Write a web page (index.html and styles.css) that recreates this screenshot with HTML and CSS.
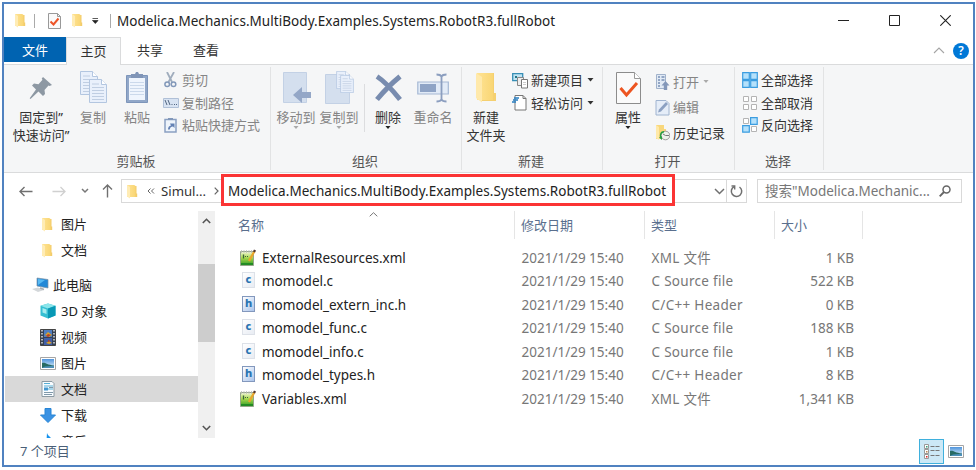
FILE: index.html
```html
<!DOCTYPE html>
<html lang="zh-CN">
<head>
<meta charset="utf-8">
<title>Modelica.Mechanics.MultiBody.Examples.Systems.RobotR3.fullRobot</title>
<link rel="stylesheet" href="styles.css">
</head>
<body>
<svg class="defs" width="0" height="0">
  <defs>
    <linearGradient id="gold" x1="0" x2="1"><stop offset="0" stop-color="#ffe394"/><stop offset="1" stop-color="#f9d675"/></linearGradient>
    <linearGradient id="sky" x1="0" y1="0" x2="0" y2="1"><stop offset="0" stop-color="#4f94dc"/><stop offset="1" stop-color="#e4f4fb"/></linearGradient>
    <linearGradient id="leaf" x1="0" y1="0" x2="0" y2="1"><stop offset="0" stop-color="#f5f8dc"/><stop offset=".45" stop-color="#a8d84e"/><stop offset="1" stop-color="#2f9a22"/></linearGradient>
  </defs>
  <symbol id="folder" viewBox="0 0 12 15"><path d="M6 2h4.500v7.500h.7V13H6z" fill="#f3cc6b"/><path d="M1 1h7a1.500 1.500 0 0 1 1.500 1.500V13H1z" fill="url(#gold)"/><path d="M1 1l3 2v11.500L1 12.500z" fill="#ffecb5"/></symbol>
  <symbol id="doc" viewBox="0 0 18 24"><path d="M.5.5h12l5 5v18H.5z" fill="#e9f0fb" stroke="#b3c6e0"/><path d="M12.500.5v5h5" fill="#fff" stroke="#b3c6e0"/><path d="M3 5h7M3 8.500h12M3 11.500h12M3 14.500h12M3 17.500h12M3 20.500h12" stroke="#c0cee2"/></symbol>
  <symbol id="picture" viewBox="0 0 16 13"><path d="M.5.5h15v12H.5z" fill="#fff" stroke="#a5a5a5"/><path d="M2 2h12v9H2z" fill="url(#sky)"/><path d="M2 6c3-1 5 2 12 2.500V11H2z" fill="#276a63"/><path d="M5 9.500l9-.7V11H2z" fill="#4c8fb7"/></symbol>
  <symbol id="xml" viewBox="0 0 18 18"><path d="M1.500 2.500h13v14h-13z" fill="url(#leaf)" stroke="#96a68b"/><path d="M2 14h12v2H2z" fill="#238b24"/><path d="M2.500 1v3M5 1v3M7.500 1v3M10 1v3M12.500 1v3" stroke="#bbb" stroke-width=".8"/><path d="M4.500 5.500v4" stroke="#386438" stroke-width="1.300"/><path d="M6 7.500h4" stroke="#386438" stroke-dasharray="1 1"/><path d="M10 12L15.500 2" stroke="#e9a62d" stroke-width="2.300"/><path d="M15 3l1-2" stroke="#4f3735" stroke-width="2.300"/></symbol>
  <symbol id="down" viewBox="0 0 7 4"><path d="M.5 0h6l-3 3.500z" fill="currentColor"/></symbol>
</svg>
<div class="window">
  <header class="titlebar">
    <svg class="tb-folder" width="12" height="15"><use href="#folder"/></svg>
    <i class="tb-line"></i>
    <svg class="tb-check" width="13" height="16" viewBox="0 0 13 16"><path d="M.5.5h9l3 3v12H.5z" fill="#fafafa" stroke="#999"/><path d="M9.500.5v3h3" fill="none" stroke="#999"/><path d="M2.500 8.500l3 3 5-6" fill="none" stroke="#ed5427" stroke-width="2"/></svg>
    <svg class="tb-folder2" width="12" height="15"><use href="#folder"/></svg>
    <svg class="tb-drop" width="7" height="6" viewBox="0 0 7 6"><path d="M.5.5h5.500M.5 2.500h5.500l-2.700 3z" fill="#222" stroke="#333" stroke-width=".8"/></svg>
    <i class="tb-line last"></i>
    <span class="title">Modelica.Mechanics.MultiBody.Examples.Systems.RobotR3.fullRobot</span>
    <div class="controls">
      <svg width="11" height="11" viewBox="0 0 11 11"><path d="M0 5.500h11" stroke="#222"/></svg>
      <svg width="11" height="11" viewBox="0 0 11 11"><path d="M.5.5h10v10H.5z" fill="none" stroke="#222"/></svg>
      <svg width="11" height="11" viewBox="0 0 11 11"><path d="M.3.3l10.400 10.400M10.700.3L.3 10.700" stroke="#222" stroke-width="1.100"/></svg>
    </div>
  </header>
  <nav class="tabs">
    <span class="tab file">文件</span><span class="tab active">主页</span><span class="tab share">共享</span><span class="tab view">查看</span>
    <div class="tabs-end">
      <svg width="12" height="7" viewBox="0 0 12 7"><path d="M1 6l5-5 5 5" fill="none" stroke="#a5a5a5" stroke-width="1.100"/></svg>
      <span class="help">?</span>
    </div>
  </nav>
  <section class="ribbon">
    <div class="group clipboard">
      <div class="tools">
        <div class="big pin"><div class="pic"><svg width="24" height="24" viewBox="0 0 24 24"><path d="M14 1l9 8-2.500 1-1-.5-4 4.500.5 4-2 2-4.500-4.500L1.500 23l-.8-.7L7 13.500 3 9.500l2-2 4.500.7 4-4.500-.8-1z" fill="#8d98a3"/></svg></div><span>固定到”<br>快速访问”</span></div>
        <div class="big copy off"><div class="pic"><svg width="27" height="33" viewBox="0 0 27 33"><use href="#doc" width="18" height="24"/><use href="#doc" x="9" y="8" width="18" height="24"/></svg></div><span>复制</span></div>
        <div class="big paste off"><div class="pic"><svg width="24" height="33" viewBox="0 0 24 33"><path d="M1.500 4.500h21v27h-21z" fill="#91a7c8" stroke="#7d95ba"/><path d="M4 7h16v22H4z" fill="#eff5fd"/><path d="M5 11.500h14M5 14.500h14M5 17.500h14M5 20.500h14M5 23.500h14" stroke="#cbd9eb"/><path d="M6 3h4l1-2h2l1 2h4v4H6z" fill="#8095b7"/></svg></div><span>粘贴</span></div>
        <div class="smalls off">
          <div class="small"><svg width="16" height="16" viewBox="0 0 16 16"><path d="M4 0l5 10M11 0L5.500 10" stroke="#a0adbd" stroke-width="1.800"/><circle cx="4.200" cy="12.300" r="2.300" fill="none" stroke="#8298b9" stroke-width="1.500"/><circle cx="10.500" cy="12.300" r="2.300" fill="none" stroke="#8298b9" stroke-width="1.500"/></svg>剪切</div>
          <div class="small"><svg width="16" height="16" viewBox="0 0 16 16"><path d="M.5 3.500h15v9H.5z" fill="#d8e3f2" stroke="#b0c0d7"/><path d="M2 5l2 5M5 5l2 5M8.500 9.500h1M11 9.500h1M13 9.500h1" stroke="#526681"/></svg>复制路径</div>
          <div class="small"><svg width="16" height="16" viewBox="0 0 16 16"><path d="M2 2.500h11v12.500H2z" fill="#eef4fb" stroke="#8aa0c2" stroke-width="1.500"/><path d="M5 3V1h5v2z" fill="#8298ba"/><path d="M5 12.500c0-2.500 1-3.500 3-4L7 6.500h4.500V11l-1.500-1.500c-2 0-3 1-3.200 3z" fill="#6381b4"/></svg>粘贴快捷方式</div>
        </div>
      </div>
      <div class="caption">剪贴板</div>
    </div>
    <div class="group organize">
      <div class="tools">
        <div class="big move off"><div class="pic"><svg width="29" height="33" viewBox="0 0 29 33"><path d="M1.500 1.500h23v30h-23z" fill="#d4dfee" stroke="#c3d1e5"/><path d="M11 24l9-8v5h9v6h-9v5z" fill="#94a7c7"/></svg></div><span>移动到</span><svg class="drop" width="6" height="3.500"><use href="#down"/></svg></div>
        <div class="big copyto off"><div class="pic"><svg width="30" height="34" viewBox="0 0 30 34"><path d="M1.500 3.500h24v29h-24z" fill="#d4dfee" stroke="#c3d1e5"/><use href="#doc" x="12" width="14" height="18"/><use href="#doc" x="16" y="4" width="14" height="18"/></svg></div><span>复制到</span><svg class="drop" width="6" height="3.500"><use href="#down"/></svg></div>
        <i class="divider"></i>
        <div class="big delete"><div class="pic"><svg width="27" height="28" viewBox="0 0 27 28"><path d="M2 2.500c8 5 15 13 23 23M25 2.500C17 9 9 17 2 25.500" fill="none" stroke="#788caf" stroke-width="5"/></svg></div><span>删除</span><svg class="drop" width="6" height="3.500"><use href="#down"/></svg></div>
        <div class="big rename off"><div class="pic"><svg width="32" height="30" viewBox="0 0 32 30"><path d="M.8 9h30.500v12H.8z" fill="#e2ebf7" stroke="#a5b8d4" stroke-width="1.200"/><path d="M3 11h16v8H3z" fill="#8fa4c6"/><path d="M19.500 1.500q4 0 5 2 1-2 5-2M24.500 3v24M19.500 28.500q4 0 5-2 1 2 5 2" fill="none" stroke="#8b9ebf" stroke-width="1.800"/></svg></div><span>重命名</span></div>
      </div>
      <div class="caption">组织</div>
    </div>
    <div class="group new">
      <div class="tools">
        <div class="big newfolder"><div class="pic"><svg width="22" height="31" viewBox="0 0 22 31"><path d="M7 1h12v20h2v8H7z" fill="#f5d070"/><path d="M2 1h15q1 0 1 1v26H2z" fill="url(#gold)"/><path d="M1 1l6 4v25.500L1 26z" fill="#ffe9ab"/></svg></div><span>新建<br>文件夹</span></div>
        <div class="smalls">
          <div class="small"><svg width="16" height="17" viewBox="0 0 16 17"><path d="M.7 1.700h10v7h-10z" fill="#c1e3f2" stroke="#378eb5" stroke-width="1.300"/><path d="M5.500 5.500h6v8h-6z" fill="#eee" stroke="#888"/><path d="M9.500 7.500h6v8.500h-6z" fill="#fff" stroke="#777"/><path d="M11 10.500h3M11 12.500h3" stroke="#ccc"/><path d="M3 4h2v2H3z" fill="#278"/></svg>新建项目<svg class="arrow" width="7" height="4"><use href="#down"/></svg></div>
          <div class="small"><svg width="16" height="17" viewBox="0 0 16 17"><path d="M3 1.500h8l3 3v11.500H3z" fill="#fff" stroke="#777"/><path d="M11 1.500v3h3" fill="none" stroke="#777"/><path d="M2 4h5M1 6h5M0 8h4" stroke="#267dc1" stroke-width="1.300"/></svg>轻松访问<svg class="arrow" width="7" height="4"><use href="#down"/></svg></div>
        </div>
      </div>
      <div class="caption">新建</div>
    </div>
    <div class="group open">
      <div class="tools">
        <div class="big props"><div class="pic"><svg width="25" height="32" viewBox="0 0 25 32"><path d="M.5.5h18l6 6v25H.5z" fill="#fafafa" stroke="#8c8c8c"/><path d="M18.500.5v6h6" fill="#fff" stroke="#999"/><path d="M4.500 16l6 7L21 11" fill="none" stroke="#ed5521" stroke-width="3"/></svg></div><span>属性</span><svg class="drop" width="6" height="3.500"><use href="#down"/></svg></div>
        <div class="smalls loose">
          <div class="small off"><svg width="15" height="18" viewBox="0 0 15 18"><path d="M1.500 1.500h9v14h-9z" fill="#e1eaf5" stroke="#a1b2cb"/><path d="M3 4h2M6.500 4h3M3 7h2M6.500 7h3M3 10h2M3 13h2" stroke="#7890b5" stroke-width="1.700"/><path d="M10.500 8l4 4.500h-2.300V17H8.800v-4.500H6.500z" fill="#8397b9"/></svg>打开<svg class="arrow" width="6" height="3.500"><use href="#down"/></svg></div>
          <div class="small off"><svg width="15" height="17" viewBox="0 0 15 17"><path d="M1 1.500h10l3 3V16H1z" fill="#e5edf8" stroke="#a0b4d0"/><path d="M3 13.500l1-3L11 3l2 2-7 7.500z" fill="#8ca1c2"/></svg>编辑</div>
          <div class="small"><svg width="15" height="17" viewBox="0 0 15 17"><path d="M1 1h8v4h2v10H1z" fill="#f8d77c"/><path d="M1 1l3 2v13l-3-2z" fill="#ffe9a8"/><circle cx="10.500" cy="11.500" r="4.300" fill="#eef3eb" stroke="#888" stroke-width=".8"/><path d="M14 11.500h-3.500L8 10" fill="none" stroke="#777"/><path d="M9 7c-3.500 0-4.500 3-4 6l-1 .5L7 16v-4l-1 .7C6 10 7 9 9 8.500z" fill="#28a044"/></svg>历史记录</div>
        </div>
      </div>
      <div class="caption">打开</div>
    </div>
    <div class="group select">
      <div class="tools">
        <div class="smalls">
          <div class="small"><svg width="16" height="16" viewBox="0 0 16 16"><path d="M.7.7h6.600v6.600H.7zM8.700.7h6.600v6.600H8.700zM.7 8.700h6.600v6.600H.7zM8.700 8.700h6.600v6.600H8.700z" fill="#b5e1fb" stroke="#3b9de0" stroke-width="1.200"/></svg>全部选择</div>
          <div class="small"><svg width="16" height="16" viewBox="0 0 16 16"><path d="M1.500 1.500h5v5h-5zM9.500 1.500h5v5h-5zM1.500 9.500h5v5h-5zM9.500 9.500h5v5h-5z" fill="#fff" stroke="#b4b4b4"/></svg>全部取消</div>
          <div class="small"><svg width="16" height="16" viewBox="0 0 16 16"><path d="M1.500 1.500h5v5h-5zM9.500 9.500h5v5h-5z" fill="#fff" stroke="#b4b4b4"/><path d="M8.600.7h6.600v6.600H8.600zM.7 8.600h6.600v6.600H.7z" fill="#b5e1fb" stroke="#3b9de0" stroke-width="1.200"/></svg>反向选择</div>
        </div>
      </div>
      <div class="caption">选择</div>
    </div>
  </section>
  <section class="location">
    <svg class="back" width="14" height="11" viewBox="0 0 14 11"><path d="M13.500 5.500H1M5.500 1L1 5.500 5.500 10" fill="none" stroke="#707070" stroke-width="1.400"/></svg>
    <svg class="forward" width="14" height="11" viewBox="0 0 14 11"><path d="M.5 5.500H13M8.500 1L13 5.500 8.500 10" fill="none" stroke="#d0d0d0" stroke-width="1.300"/></svg>
    <svg class="recent" width="8" height="6" viewBox="0 0 8 6"><path d="M1 1l3 3 3-3" fill="none" stroke="#777" stroke-width="1.500"/></svg>
    <svg class="up" width="11" height="14" viewBox="0 0 11 14"><path d="M5.500 13.500V1M1 5.500L5.500 1 10 5.500" fill="none" stroke="#707070" stroke-width="1.400"/></svg>
    <div class="address">
      <svg class="addr-folder" width="12" height="15"><use href="#folder"/></svg>
      <svg class="chevs" width="8" height="6" viewBox="0 0 8 6"><path d="M3.500.5L1 3l2.500 2.500M7 .5L4.500 3 7 5.500" fill="none" stroke="#666"/></svg>
      <span class="crumb">Simul...</span>
      <svg class="chev" width="5" height="8" viewBox="0 0 5 8"><path d="M.7.7L4 4 .7 7.300" fill="none" stroke="#666" stroke-width="1.200"/></svg>
      <span class="path">Modelica.Mechanics.MultiBody.Examples.Systems.RobotR3.fullRobot</span>
      <svg class="expand" width="11" height="7" viewBox="0 0 11 7"><path d="M1 1l4.500 4.500L10 1" fill="none" stroke="#707070" stroke-width="1.500"/></svg>
      <span class="refresh"><svg width="13" height="14" viewBox="0 0 13 14"><path d="M4.200 2.600A5.200 5.200 0 1 0 9.500 3" fill="none" stroke="#707070" stroke-width="1.500"/><path d="M1.500 2h3.200v3.500" fill="none" stroke="#707070" stroke-width="1.400"/></svg></span>
    </div>
    <div class="search"><span>搜索"Modelica.Mechanic...</span><svg width="12" height="12" viewBox="0 0 12 12"><circle cx="7.500" cy="4.500" r="3.500" fill="none" stroke="#666" stroke-width="1.500"/><path d="M5 7L.7 11.300" stroke="#666" stroke-width="1.900"/></svg></div>
  </section>
  <main class="content">
    <aside class="sidebar">
      <div class="tree">
        <div class="node"><svg width="16" height="15"><use href="#folder" width="12" height="15" x="1"/></svg>图片</div>
        <div class="node"><svg width="16" height="15"><use href="#folder" width="12" height="15" x="1"/></svg>文档</div>
        <div class="node pc"><svg width="18" height="16" viewBox="0 0 18 16"><path d="M5 1l11 1.500v8.500L5 9z" fill="#2389d7" stroke="#7b91a4" stroke-width=".7"/><path d="M6 2l7 1-7 5z" fill="#58baf3"/><path d="M0 12l6-1.500 6 2.500-6 2z" fill="#d3d7da"/><path d="M8 11l4 1.500" stroke="#a9aeb2" stroke-width="1.500"/></svg>此电脑</div>
        <div class="node"><svg width="16" height="16" viewBox="0 0 16 16"><path d="M8 .5l7.500 2.300v9.700L8 15.500.5 12.500V2.800z" fill="#35bfd2"/><path d="M8 .5l7.500 2.300L8 5.500.5 2.800z" fill="#8be5ea"/><path d="M8 5.500l7.500-2.700v9.700L8 15.500z" fill="#0898b5"/><path d="M2.500 5l4 1.500v4.500l-4-1.500z" fill="#a5ecef"/></svg>3D 对象</div>
        <div class="node"><svg width="16" height="17" viewBox="0 0 16 17"><path d="M.5.5h15v16H.5z" fill="#354256" stroke="#444"/><path d="M4 1h8v7H4z" fill="#507ec1"/><path d="M4 9h8v7H4z" fill="#415fa7"/><path d="M5 6l3-3 4 3-3 2zM6 14l3-2 3 2-3 1z" fill="#d8a32b"/><path d="M8 5l3 1-3 2-2-1zM8 11l3 1-3 1z" fill="#b74228"/><path d="M2 1v15M14 1v15" stroke="#ddd" stroke-width="1.500" stroke-dasharray="1.500 1.500"/></svg>视频</div>
        <div class="node"><svg width="16" height="13"><use href="#picture"/></svg>图片</div>
        <div class="node selected"><svg width="16" height="16" viewBox="0 0 16 16"><path d="M2 .5h10l2 2v13H2z" fill="#f8fcff" stroke="#8c9aa3"/><path d="M4 2.500h6M4 5h9M4 8h9" stroke="#56afd5"/><path d="M4 6.500h4v3H4z" fill="#4498d0"/><path d="M9 6.500h4M4 11.500h9M4 13.500h8" stroke="#8099aa"/></svg>文档</div>
        <div class="node"><svg width="16" height="15" viewBox="0 0 16 15"><path d="M5 .5h6v6.500h4.500L8 14.500.5 7H5z" fill="#3b92e3" stroke="#2785d6"/></svg>下载</div>
        <div class="node"><svg width="16" height="16" viewBox="0 0 16 16"><path d="M7 0c1 4 6 4 5 10-1-3-3-3-4-3v7H6z" fill="#1692ed"/></svg>音乐</div>
      </div>
      <div class="scrollbar">
        <svg width="9" height="6" viewBox="0 0 9 6"><path d="M.8 5l3.700-3.700L8.200 5" fill="none" stroke="#555" stroke-width="1.600"/></svg>
        <i class="thumb"></i>
        <svg width="9" height="6" viewBox="0 0 9 6"><path d="M.8 1l3.700 3.700L8.200 1" fill="none" stroke="#555" stroke-width="1.600"/></svg>
      </div>
    </aside>
    <section class="files">
      <div class="head"><span class="col-name">名称<svg class="sort" width="9" height="5" viewBox="0 0 9 5"><path d="M.7 4.300L4.500.7l3.800 3.600" fill="none" stroke="#777"/></svg></span><span>修改日期</span><span>类型</span><span>大小</span></div>
      <div class="row"><svg width="18" height="18"><use href="#xml"/></svg><span class="fn">ExternalResources.xml</span><span>2021/1/29 15:40</span><span class="type">XML 文件</span><span class="size">1 KB</span></div>
      <div class="row"><i class="src">c</i><span class="fn">momodel.c</span><span>2021/1/29 15:40</span><span class="type">C Source file</span><span class="size">522 KB</span></div>
      <div class="row"><i class="src hdr">h</i><span class="fn">momodel_extern_inc.h</span><span>2021/1/29 15:40</span><span class="type">C/C++ Header</span><span class="size">0 KB</span></div>
      <div class="row"><i class="src">c</i><span class="fn">momodel_func.c</span><span>2021/1/29 15:40</span><span class="type">C Source file</span><span class="size">188 KB</span></div>
      <div class="row"><i class="src">c</i><span class="fn">momodel_info.c</span><span>2021/1/29 15:40</span><span class="type">C Source file</span><span class="size">1 KB</span></div>
      <div class="row"><i class="src hdr">h</i><span class="fn">momodel_types.h</span><span>2021/1/29 15:40</span><span class="type">C/C++ Header</span><span class="size">8 KB</span></div>
      <div class="row"><svg width="18" height="18"><use href="#xml"/></svg><span class="fn">Variables.xml</span><span>2021/1/29 15:40</span><span class="type">XML 文件</span><span class="size">1,341 KB</span></div>
    </section>
  </main>
  <footer class="status"><span>7 个项目</span>
    <div class="views"><span class="details"><svg width="16" height="15" viewBox="0 0 16 15"><path d="M.5.5h4v4h-4zM.5 5.500h4v4h-4zM.5 10.500h4v4h-4z" fill="#fff" stroke="#999"/><path d="M6.500 2.500h4M11.500 2.500h4M6.500 6.500h4M11.500 6.500h4M6.500 11.500h4M11.500 11.500h4" stroke="#777"/><path d="M2 2h1.500v1.500H2z" fill="#397"/><path d="M2 7h1.500v1.500H2z" fill="#b85"/><path d="M2 12h1.500v1.500H2z" fill="#d22"/></svg></span><svg width="16" height="13"><use href="#picture"/></svg></div>
  </footer>
</div>
</body>
</html>
```
FILE: styles.css
```css
* { box-sizing: border-box; }
body { margin: 0; background: #fff; color: #333; font: 13px/18px "Noto Sans", "Noto Sans CJK SC", sans-serif; overflow: hidden; }
svg { display: block; flex: none; }
i { font-style: normal; flex: none; }
span { white-space: nowrap; }
.defs { position: absolute; }
.window { margin: 2px 1px 0 2px; width: 973px; height: 465px; border: 2px solid #5082c0; display: flex; flex-direction: column; background: #fff; }

.titlebar { height: 33px; flex: none; display: flex; align-items: center; padding-left: 10px; }
.tb-line { width: 1px; height: 14px; background: #aaa; margin-left: 8px; }
.tb-check { margin-left: 13px; }
.tb-folder2 { margin-left: 10px; }
.tb-drop { margin-left: 9px; }
.tb-line.last { margin-left: 11px; }
.title { margin-left: 6px; font-size: 13.500px; letter-spacing: .05px; color: #222; }
.controls { margin-left: auto; display: flex; gap: 40px; padding-right: 22px; }

.tabs { height: 27px; flex: none; display: flex; }
.tab { display: flex; justify-content: center; align-items: center; height: 26px; width: 56px; }
.tab.file { width: 62px; height: 25px; background: #0063b1; color: #fff; }
.tab.active { height: 28px; padding-bottom: 2px; background: #f5f6f7; border: 1px solid #dadbdc; border-bottom: 0; position: relative; z-index: 1; width: 55px; margin-right: 1px; }
.tabs-end { margin-left: auto; display: flex; align-items: center; gap: 8px; padding-right: 4px; }
.help { width: 16px; height: 16px; border-radius: 50%; background: #0078d7; color: #fff; text-align: center; line-height: 16px; font-size: 12px; font-weight: 600; }

.ribbon { height: 109px; flex: none; display: flex; background: #f5f6f7; border: solid #dadbdc; border-width: 1px 0; padding-top: 2px; }
.group { height: 103px; border-right: 1px solid #e2e3e4; display: flex; flex-direction: column; }
.clipboard { width: 267px; }
.organize { width: 191px; }
.new { width: 141px; }
.open { width: 132px; }
.select { width: 89px; }
.tools { display: flex; height: 84px; flex: none; }
.clipboard .tools { padding-left: 2px; }
.organize .tools { padding-left: 4px; }
.caption { text-align: center; line-height: 20px; color: #555; padding-right: 2px; }
.big { display: flex; flex-direction: column; align-items: center; text-align: center; flex: none; }
.pic { height: 41px; display: flex; align-items: center; }
.big.pin { width: 70px; }
.copy { width: 34px; }
.paste { width: 54px; }
.move { width: 42px; }
.copyto { width: 44px; }
.delete { width: 46px; }
.rename { width: 44px; }
.newfolder { width: 48px; }
.props { width: 50px; }
.off { color: #858585; }
.drop { color: #222; }
.off .drop, .off .arrow { color: #aaa; }
.divider { width: 1px; height: 48px; margin: 17px 0 0 3px; background: #dcdddf; }
.smalls { padding-top: 2px; }
.small { height: 22.500px; display: flex; align-items: center; }
.small > svg:first-child { margin-right: 3px; }
.small .arrow { margin-left: 4px; }
.smalls.loose { padding: 2px 0 0 2px; }
.loose .small { height: 25.500px; }
.select .smalls { padding-left: 7px; }
.new .smalls { padding-left: 2px; }
.clipboard .smalls { padding-left: 0; margin-left: -1px; }

.location { height: 38px; flex: none; display: flex; align-items: center; padding: 0 0 2px 15px; }
.forward { margin-left: 19px; }
.recent { margin-left: 15px; }
.up { margin-left: 13px; }
.address { margin-left: 8px; width: 626px; height: 24px; border: 1px solid #d9d9d9; display: flex; align-items: center; }
.addr-folder { margin-left: 4px; }
.chevs { margin-left: 9px; }
.crumb { margin-left: 6px; width: 46px; font-size: 13.200px; }
.chev { margin-left: 7px; }
.path { margin: -2px 0 0 2px; width: 454px; height: 32px; flex: none; border: 3px solid #fb3434; background: #fff; color: #222; font-size: 13.500px; letter-spacing: .05px; line-height: 26px; padding: 1px 0 0 4px; position: relative; }
.expand { margin-left: 39px; }
.refresh { margin-left: auto; width: 20px; height: 22px; border-left: 1px solid #d9d9d9; display: flex; align-items: center; justify-content: center; }
.search { margin-left: 10px; width: 205px; height: 24px; border: 1px solid #d9d9d9; display: flex; align-items: center; justify-content: space-between; padding: 0 10px 0 7px; color: #777; font-size: 13.500px; }

.content { height: 227px; flex: none; display: flex; }
.sidebar { width: 212px; display: flex; height: 227px; overflow: hidden; }
.tree { width: 194px; color: #222; }
.node { height: 26px; display: flex; align-items: center; gap: 5px; padding-left: 36px; }
.node.pc { margin-top: 9px; padding-left: 28px; gap: 3px; }
.node.selected { background: #d9d9d9; margin-left: 1px; padding-left: 35px; }
.scrollbar { width: 17px; height: 227px; background: #f0f0f0; display: flex; flex-direction: column; align-items: center; padding: 7px 0; justify-content: space-between; }
.thumb { width: 17px; height: 78px; background: #cdcdcd; margin-bottom: 44px; }
.files { width: 757px; }
.head { display: flex; height: 28px; color: #5a6f8e; }
.head span { border-right: 1px solid #e5e5e5; padding: 5px 0 0 6px; width: 130px; }
.head .col-name { width: 299px; padding-left: 22px; display: flex; }
.head span:last-child { width: 88px; }
.sort { margin: -4px 0 0 105px; }
.row { height: 23.500px; display: flex; align-items: center; padding-left: 23px; color: #777; font-size: 13.500px; }
.head + .row { margin-top: 7px; }
.row span { width: 130px; }
.row .fn { width: 259.500px; margin-left: 5px; color: #222; }
.row .type { letter-spacing: .3px; }
.row .size { width: 72.500px; text-align: right; }
.src { width: 13px; height: 16px; margin: 0 2px 2px 3px; border: 1px solid #dde1e8; background: linear-gradient(135deg, #fff, #e8ecf3); color: #2a74b2; font-weight: 800; font-size: 11px; line-height: 12px; text-align: center; }
.src.hdr { border-color: #8398bd; background: linear-gradient(135deg, #fff, #abc4eb); }

.status { flex: 1; display: flex; color: #4a5f78; padding: 4px 0 0 16px; }
.views { margin: -3px 9px 0 auto; display: flex; align-items: center; gap: 4px; height: 24px; }
.details { width: 25px; height: 25px; background: #cce8f6; border: 1px solid #3fb0dd; display: flex; align-items: center; justify-content: center; }
```
